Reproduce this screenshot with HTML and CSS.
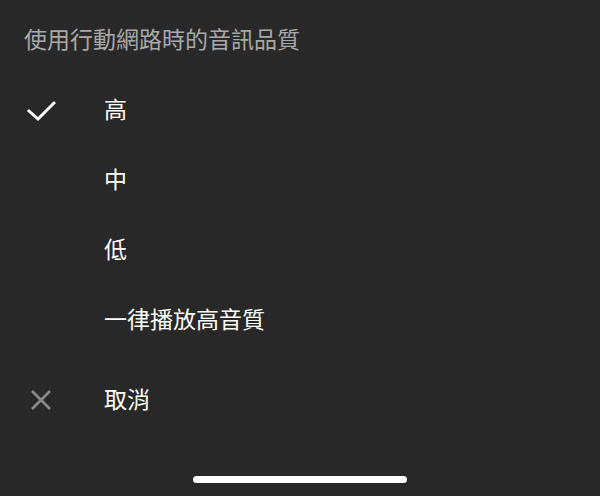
FILE: index.html
```html
<!DOCTYPE html>
<html lang="zh-Hant">
<head>
<meta charset="utf-8">
<link rel="stylesheet" href="styles.css">
</head>
<body>
<div class="sheet">
  <div class="title">使用行動網路時的音訊品質</div>
  <ul class="options">
    <li class="row">
      <span class="icon">
        <svg width="30" height="24" viewBox="0 0 30 24"><polyline points="3,13 12,21 28,5" fill="none" stroke="#fff" stroke-width="3" stroke-linecap="square" stroke-linejoin="miter"/></svg>
      </span>
      <span class="label">高</span>
    </li>
    <li class="row"><span class="icon"></span><span class="label">中</span></li>
    <li class="row"><span class="icon"></span><span class="label">低</span></li>
    <li class="row"><span class="icon"></span><span class="label">一律播放高音質</span></li>
  </ul>
  <div class="row cancel">
    <span class="icon">
      <svg width="24" height="24" viewBox="0 0 24 24"><path d="M3 3 L21 21 M21 3 L3 21" stroke="#8a8a8a" stroke-width="2.6" fill="none"/></svg>
    </span>
    <span class="label">取消</span>
  </div>
  <div class="home"><span class="bar"></span></div>
</div>
</body>
</html>
```
FILE: styles.css
```css
html, body {
  margin: 0;
  padding: 0;
  background: #282828;
}
.sheet {
  width: 600px;
  height: 496px;
  display: flex;
  flex-direction: column;
  font-family: "Noto Sans CJK TC", "Noto Sans CJK SC", sans-serif;
  overflow: hidden;
}
.title {
  height: 70px;
  padding-top: 3px;
  padding-left: 24px;
  line-height: 70px;
  font-size: 23px;
  color: #a9a9a9;
}
.options {
  list-style: none;
  margin: 0;
  padding: 0;
}
.row {
  height: 70px;
  display: flex;
  align-items: center;
  gap: 23px;
}
.icon {
  width: 81px;
  display: flex;
  justify-content: center;
  align-items: center;
  padding-top: 4px;
}
.icon svg { display: block; }
.label {
  font-size: 23px;
  color: #ffffff;
  line-height: 1;
}
.cancel {
  margin-top: 10px;
}
.home {
  display: flex;
  justify-content: center;
  padding-top: 43px;
}
.bar {
  width: 214px;
  height: 7px;
  border-radius: 4px;
  background: #ffffff;
}
```
